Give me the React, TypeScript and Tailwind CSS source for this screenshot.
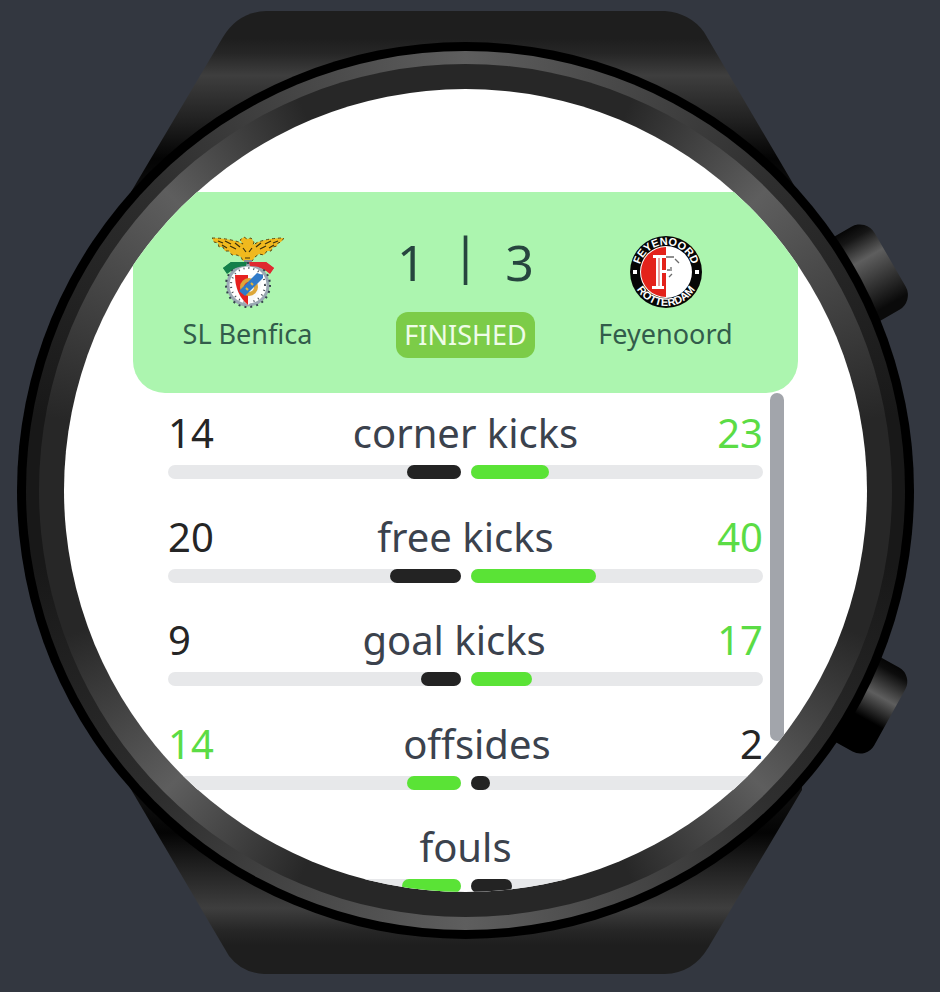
type Stat = {
  label: string;
  home: number;
  away: number;
  homeShare: number;
  awayShare: number;
  leader: "home" | "away";
};

const stats: Stat[] = [
  { label: "corner kicks", home: 14, away: 23, homeShare: 18.4, awayShare: 26.7, leader: "away" },
  { label: "free kicks", home: 20, away: 40, homeShare: 24, awayShare: 43, leader: "away" },
  { label: "goal kicks", home: 9, away: 17, homeShare: 13.5, awayShare: 21, leader: "away" },
  { label: "offsides", home: 14, away: 2, homeShare: 18.4, awayShare: 6.7, leader: "home" },
  { label: "fouls", home: 16, away: 10, homeShare: 20, awayShare: 14.3, leader: "home" },
];

function WatchBody() {
  return (
    <svg viewBox="0 0 940 992" className="absolute inset-0 h-full w-full" aria-hidden="true">
      <defs>
        <linearGradient id="strapTop" gradientUnits="userSpaceOnUse" x1="0" y1="11" x2="0" y2="195">
          <stop offset="0" stopColor="#1e1e1e" />
          <stop offset="0.15" stopColor="#1e1e1e" />
          <stop offset="0.23" stopColor="#262626" />
          <stop offset="0.35" stopColor="#3e3e3e" />
          <stop offset="0.6" stopColor="#202020" />
          <stop offset="0.8" stopColor="#040404" />
          <stop offset="1" stopColor="#0d0d0d" />
        </linearGradient>
        <linearGradient id="strapBottom" gradientUnits="userSpaceOnUse" x1="0" y1="974" x2="0" y2="786">
          <stop offset="0" stopColor="#1e1e1e" />
          <stop offset="0.15" stopColor="#1e1e1e" />
          <stop offset="0.23" stopColor="#262626" />
          <stop offset="0.35" stopColor="#3e3e3e" />
          <stop offset="0.6" stopColor="#1c1c1c" />
          <stop offset="0.75" stopColor="#040404" />
          <stop offset="0.9" stopColor="#0d0d0d" />
          <stop offset="1" stopColor="#0d0d0d" />
        </linearGradient>
        <linearGradient id="crownUpper" x1="0" y1="0" x2="0" y2="1">
          <stop offset="0" stopColor="#050505" />
          <stop offset="0.12" stopColor="#161616" />
          <stop offset="0.36" stopColor="#5e5e5e" />
          <stop offset="0.9" stopColor="#0a0a0a" />
          <stop offset="1" stopColor="#0a0a0a" />
        </linearGradient>
        <linearGradient id="crownLower" x1="0" y1="0" x2="0" y2="1">
          <stop offset="0" stopColor="#050505" />
          <stop offset="0.08" stopColor="#0c0c0c" />
          <stop offset="0.36" stopColor="#5e5e5e" />
          <stop offset="0.64" stopColor="#000000" />
          <stop offset="1" stopColor="#000000" />
        </linearGradient>
      </defs>
      <path d="M266 11 H665 Q690 13 704 32 L798 192 H131 L223 37 Q238 12 266 11Z" fill="url(#strapTop)" />
      <path d="M129 786 H802 V790 L708 948 Q693 973 665 974 H264 Q242 973 229 956Z" fill="url(#strapBottom)" />
      <rect x="570" y="622" width="71" height="96" rx="17" transform="rotate(-30)" fill="url(#crownUpper)" />
      <rect x="1060" y="148" width="66" height="96" rx="16" transform="rotate(29)" fill="url(#crownLower)" />
    </svg>
  );
}

function BenficaCrest() {
  return (
    <svg viewBox="0 0 72 72" className="size-[72px]" role="img" aria-label="SL Benfica crest">
      <path
        d="M0 2 Q14 2 27 6 L31 8 L28 4 L32 1 L35 3 L39 2 L42 6 L41 9 L46 6 Q58 2 72 2 L69 6 L66 7 L65 10 L61 11 L59 15 L55 15 L52 19 L47 18 L43 21 L40 25 H31 L29 21 L25 19 L20 19 L17 15 L13 15 L11 11 L7 11 L6 7 L2 6Z"
        fill="#f0b91e"
        stroke="#5a4a12"
        strokeWidth="1"
        strokeDasharray="3 3"
      />
      <path
        d="M6 5 l5 2 M13 5 l6 3 M10 9 l5 3 M18 10 l6 3 M23 7 l5 4 M66 5 l-5 2 M59 5 l-6 3 M62 9 l-5 3 M54 10 l-6 3 M49 7 l-5 4 M31 12 l3 4 M40 12 l-3 4 M33 22 h5"
        stroke="#3a320c"
        strokeWidth="1.2"
        fill="none"
      />
      <path d="M11 32 L19 26 H35 L34 31 Q24 30 15 38Z" fill="#14804a" />
      <path d="M62 32 L54 26 H37 L38 31 Q50 30 58 38Z" fill="#df2a30" />
      <path d="M32 24 h8 v4 h-8Z" fill="#8d9098" />
      <circle cx="36" cy="49" r="20" fill="#ffffff" stroke="#9aa8b3" strokeWidth="3" />
      <circle cx="36" cy="49" r="22" fill="none" stroke="#35424d" strokeWidth="2" strokeDasharray="2 4" />
      <circle cx="36" cy="49" r="17" fill="none" stroke="#454c54" strokeWidth="2" strokeDasharray="1 4" />
      <path d="M11 32 L19 26 H35 L34 30 Q24 30 15 37Z" fill="#14804a" />
      <path d="M62 32 L54 26 H37 L38 30 Q50 30 58 37Z" fill="#df2a30" />
      <path d="M23 39 H50 Q50 60 36 69 Q23 58 23 39Z" fill="#f7f8fa" />
      <path d="M23 39 H36 V69 Q23 58 23 39Z" fill="#e6211f" />
      <circle cx="37" cy="51" r="7" fill="none" stroke="#dca63a" strokeWidth="4" />
      <path d="M45 37 L51 39 V42 L33 60 L27 55Z" fill="#2f7ac8" />
      <path d="M34 52 l2 2 M39 47 l2 2" stroke="#e5b53d" strokeWidth="2" />
    </svg>
  );
}

function FeyenoordCrest() {
  return (
    <svg viewBox="0 0 72 72" className="size-[72px] overflow-visible" role="img" aria-label="Feyenoord Rotterdam crest">
      <defs>
        <path id="crestArcTop" d="M9 36 A27 27 0 0 1 63 36" />
        <path id="crestArcBottom" d="M2 36 A34 34 0 0 0 70 36" />
      </defs>
      <circle cx="36" cy="36" r="36" fill="#060606" />
      <circle cx="36" cy="36" r="26" fill="#ffffff" />
      <path d="M36 11 A25 25 0 0 0 36 61Z" fill="#e3231b" />
      <g fill="#ffffff" className="font-['Liberation_Sans'] text-[11px] font-bold">
        <text textAnchor="middle">
          <textPath href="#crestArcTop" startOffset="50%">FEYENOORD</textPath>
        </text>
        <text textAnchor="middle">
          <textPath href="#crestArcBottom" startOffset="50%">ROTTERDAM</textPath>
        </text>
      </g>
      <path d="M23 19 H36 V22 H32 V34 H36 V37 H32 V50 H34 V53 H22 V50 H26 V22 H23Z" fill="#ffffff" />
      <path d="M29 22 V50" stroke="#cf4a42" strokeWidth="1" />
      <path d="M36 21 H44 M45 23 l4 4 M37 34 h3 M41 31 v4 M42 38 l-3 3" stroke="#6a6a6a" strokeWidth="1.3" fill="none" />
      <rect x="3" y="34" width="4" height="4" fill="#ffffff" />
      <rect x="65" y="34" width="4" height="4" fill="#ffffff" />
    </svg>
  );
}

function Team({ name, children }: { name: string; children: React.ReactNode }) {
  return (
    <div className="flex flex-col items-center gap-2 pt-11">
      {children}
      <h2 className="text-[27px] leading-9 whitespace-nowrap text-[#325c4b]">{name}</h2>
    </div>
  );
}

function ScoreCard() {
  return (
    <header className="grid h-[201px] shrink-0 grid-cols-[229fr_207fr_193fr] rounded-b-[32px] bg-[#acf5af] pr-9">
      <Team name="SL Benfica">
        <BenficaCrest />
      </Team>
      <div className="flex flex-col items-center gap-5 pt-10">
        <p className="flex items-center gap-[26px] text-[50px] leading-[60px] text-[#27453f]">
          <span>1</span>
          <span className="pb-4 leading-[44px]">|</span>
          <span>3</span>
        </p>
        <p className="rounded-xl bg-[#7ccc48] px-2 text-[27px] leading-[46px] text-[#effce8]">FINISHED</p>
      </div>
      <Team name="Feyenoord">
        <FeyenoordCrest />
      </Team>
    </header>
  );
}

function StatRow({ stat }: { stat: Stat }) {
  const homeLeads = stat.leader === "home";
  return (
    <li className="flex flex-col gap-2 pt-4">
      <div className="flex justify-between text-[40px] leading-[48px] text-[#3b424d]">
        <span className={homeLeads ? "text-[#5bdc45]" : "text-[#252525]"}>{stat.home}</span>
        <span>{stat.label}</span>
        <span className={homeLeads ? "text-[#252525]" : "text-[#5bdc45]"}>{stat.away}</span>
      </div>
      <div className="grid grid-cols-2 gap-[10px]">
        <div className="flex h-[14px] justify-end rounded-full bg-[#e7e8ea]">
          <div
            className={homeLeads ? "rounded-full bg-[#5ae336]" : "rounded-full bg-[#232323]"}
            style={{ width: `${stat.homeShare}%` }}
          />
        </div>
        <div className="flex h-[14px] rounded-full bg-[#e7e8ea]">
          <div
            className={homeLeads ? "rounded-full bg-[#232323]" : "rounded-full bg-[#5ae336]"}
            style={{ width: `${stat.awayShare}%` }}
          />
        </div>
      </div>
    </li>
  );
}

export default function App() {
  return (
    <main className="flex min-h-screen items-center justify-center bg-[#333740] font-['Noto_Sans',sans-serif]">
      <div className="relative aspect-[940/992] w-full max-w-[940px] pt-[42px] pr-[26px] pl-[17px]">
        <WatchBody />
        <div className="relative aspect-square rounded-full bg-black p-[9px]">
          <div className="h-full rounded-full bg-[conic-gradient(#5e5e5e_0deg,#2e2e2e_45deg,#181818_80deg,#181818_100deg,#2e2e2e_135deg,#5e5e5e_180deg,#2e2e2e_225deg,#181818_260deg,#181818_280deg,#2e2e2e_315deg,#5e5e5e_360deg)] p-[13px]">
            <div className="h-full rounded-full bg-[conic-gradient(#272727_0deg,#272727_23deg,#5e5e5e_45deg,#272727_80deg,#272727_110deg,#5e5e5e_135deg,#272727_157deg,#272727_203deg,#5e5e5e_225deg,#272727_250deg,#272727_280deg,#5e5e5e_315deg,#272727_337deg,#272727_360deg)] p-[25px]">
              <section
                aria-label="Match statistics"
                className="flex h-full flex-col overflow-hidden rounded-full bg-white px-[69px] pt-[103px]"
              >
                <ScoreCard />
                <div className="relative shrink-0">
                  <ul className="grid h-[518px] grid-rows-5 px-[35px]">
                    {stats.map((stat) => (
                      <StatRow key={stat.label} stat={stat} />
                    ))}
                  </ul>
                  <div className="absolute top-0 right-[14px] h-[348px] w-[14px] rounded-full bg-[#a2a5ab]" />
                </div>
              </section>
            </div>
          </div>
        </div>
      </div>
    </main>
  );
}
